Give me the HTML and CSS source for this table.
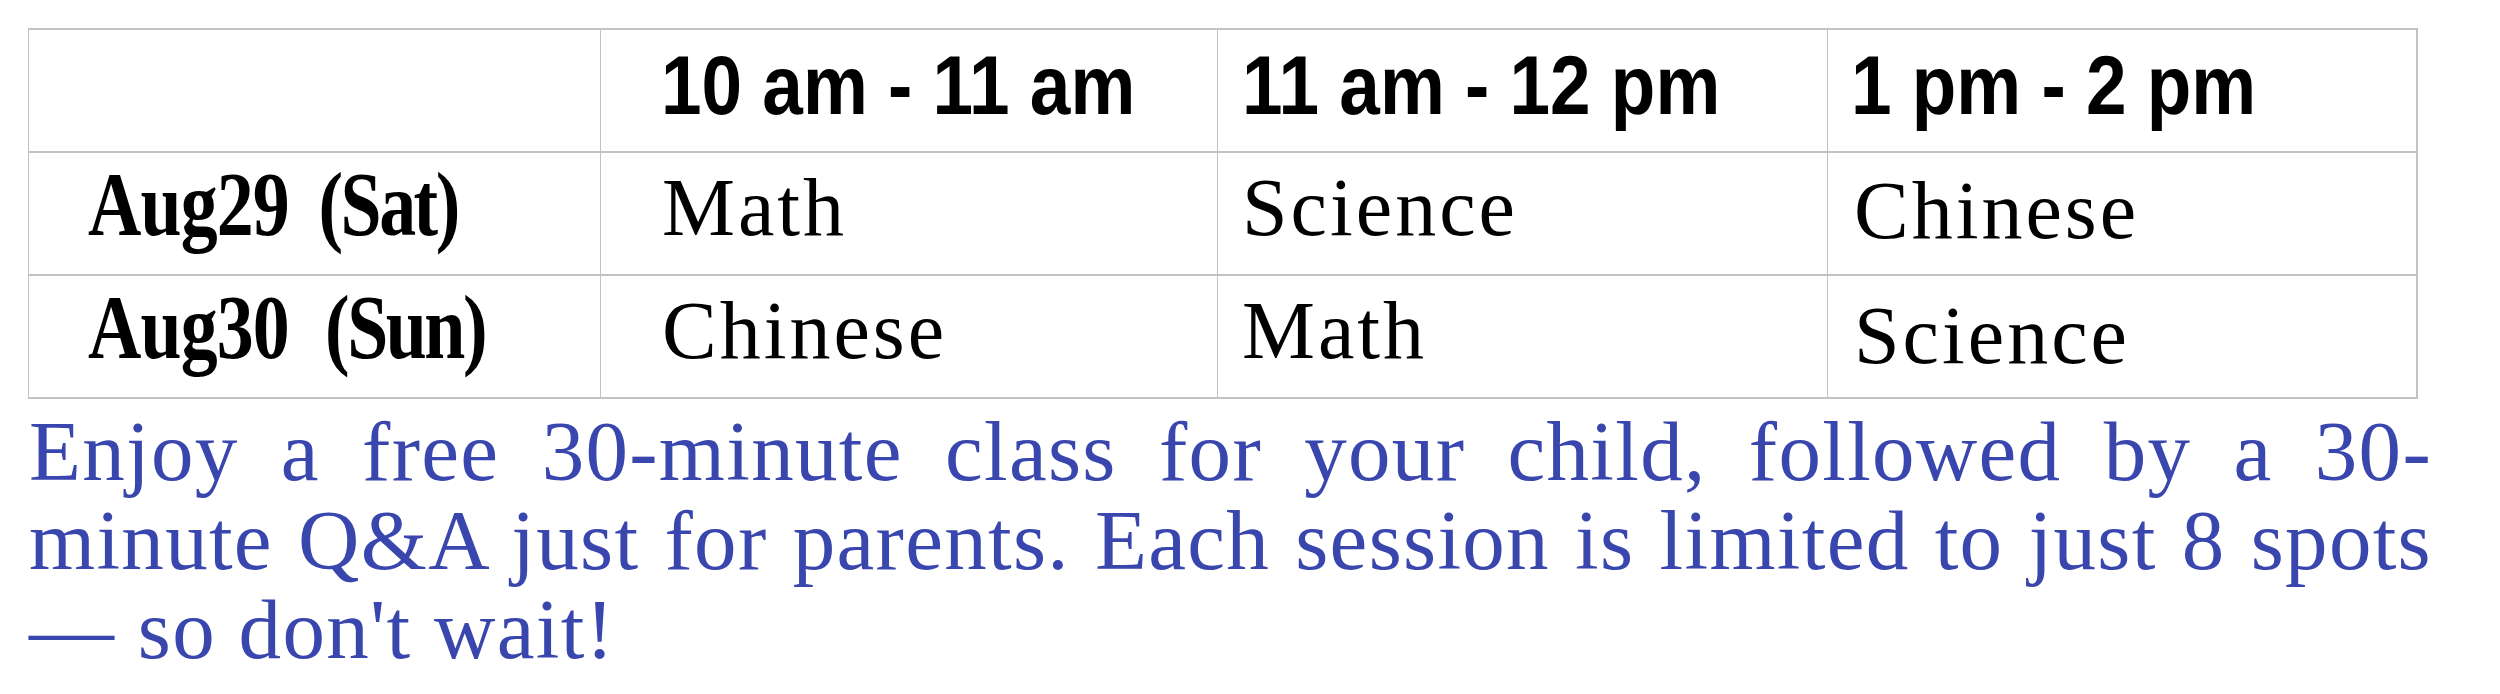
FILE: index.html
```html
<!DOCTYPE html>
<html lang="en">
<head>
<meta charset="utf-8">
<title>Schedule</title>
<link rel="stylesheet" href="styles.css">
</head>
<body>
<main class="page">
  <table class="schedule">
    <colgroup>
      <col class="c-label">
      <col class="c-one">
      <col class="c-two">
      <col class="c-three">
    </colgroup>
    <tr class="row">
      <td class="cell label"></td>
      <td class="cell head first"><span class="narrow">10 am - 11 am</span></td>
      <td class="cell head"><span class="narrow">11 am - 12 pm</span></td>
      <td class="cell head last"><span class="narrow">1 pm - 2 pm</span></td>
    </tr>
    <tr class="row">
      <td class="cell label"><span class="date">Aug29<span class="day">(Sat)</span></span></td>
      <td class="cell subject first">Math</td>
      <td class="cell subject">Science</td>
      <td class="cell subject last low">Chinese</td>
    </tr>
    <tr class="row end">
      <td class="cell label"><span class="date">Aug30<span class="day wide">(Sun)</span></span></td>
      <td class="cell subject first">Chinese</td>
      <td class="cell subject">Math</td>
      <td class="cell subject last lower">Science</td>
    </tr>
  </table>
  <p class="note">Enjoy a free 30-minute class for your child, followed by a 30-minute Q&amp;A just for parents. Each session is limited to just 8 spots — so don't wait!</p>
</main>
</body>
</html>
```

FILE: styles.css
```css
html, body {
  margin: 0;
  padding: 0;
  background: #ffffff;
}

.page {
  padding: 28px 0 0 28px;
}

.schedule {
  border-collapse: separate;
  border-spacing: 0;
  table-layout: fixed;
  width: 2390px;
}

.c-label { width: 572px; }
.c-one { width: 617px; }
.c-two { width: 610px; }
.c-three { width: 591px; }

.cell {
  box-sizing: border-box;
  height: 123px;
  padding: 0;
  vertical-align: top;
  border-top: 2px solid #c2c2c2;
  border-left: 1px solid #c2c2c2;
  white-space: nowrap;
  color: #000000;
}

.cell.last {
  border-right: 2px solid #c2c2c2;
}

.row.end .cell {
  height: 125px;
  border-bottom: 2px solid #c2c2c2;
}

.head {
  font-family: "Liberation Sans", Arial, sans-serif;
  font-weight: 700;
  font-size: 84px;
  line-height: 110px;
  padding-left: 24px;
}

.head.first { padding-left: 60px; }
.head.last { padding-left: 23px; }

.narrow {
  display: inline-block;
  transform: scaleX(0.868);
  transform-origin: left center;
}

.label {
  font-family: "Liberation Serif", "Times New Roman", serif;
  font-weight: 700;
  font-size: 90px;
  line-height: 103px;
  padding-left: 59px;
}

.date {
  display: inline-block;
  letter-spacing: -1px;
  transform: scaleX(0.82);
  transform-origin: left center;
}

.day {
  margin-left: 36px;
  letter-spacing: -3px;
}

.day.wide {
  margin-left: 44px;
}

.subject {
  font-family: "Liberation Serif", "Times New Roman", serif;
  font-weight: 400;
  font-size: 82px;
  line-height: 110px;
  letter-spacing: 3px;
  padding-left: 24px;
}

.subject.first { padding-left: 61px; }
.subject.last { padding-left: 26px; }
.subject.low { line-height: 116px; }
.subject.lower { line-height: 120px; }

.note {
  margin: 8px 0 0 1px;
  width: 2403px;
  font-family: "Liberation Serif", "Times New Roman", serif;
  font-size: 85px;
  line-height: 89px;
  letter-spacing: 1.3px;
  text-align: justify;
  color: #3946ad;
}
```
